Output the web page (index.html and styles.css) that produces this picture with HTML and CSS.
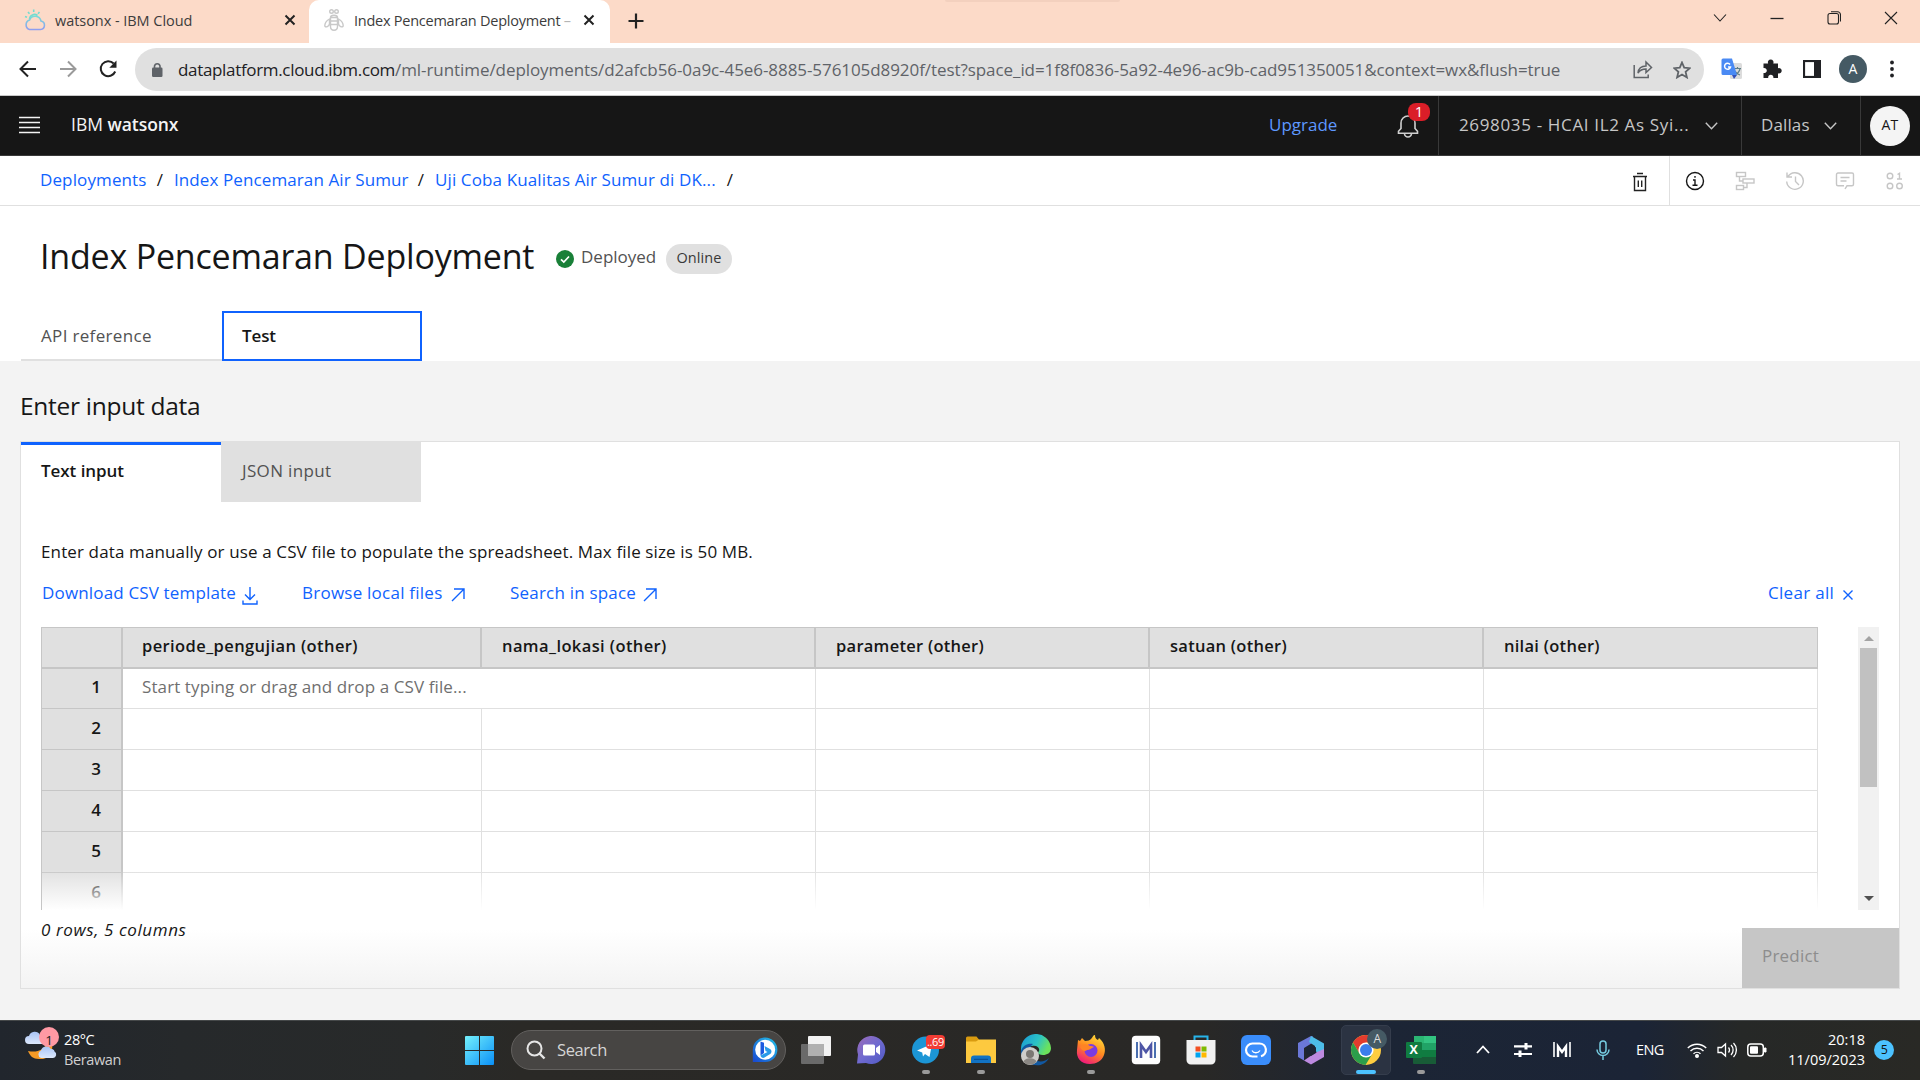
FILE: index.html
```html
<!DOCTYPE html>
<html lang="en">
<head>
<meta charset="utf-8">
<title>Index Pencemaran Deployment</title>
<link rel="stylesheet" href="styles.css">
</head>
<body>
<header class="tabstrip">
  <div class="btab">
    <svg class="fav" width="22" height="24" viewBox="0 0 22 24" fill="none" stroke-width="1.6"><defs><linearGradient id="cl" x1="0" y1="0" x2="0" y2="1"><stop offset="0" stop-color="#79dbd8"/><stop offset="1" stop-color="#8f9ef0"/></linearGradient></defs><path stroke="url(#cl)" d="M5.500 21.500h11a4.300 4.300 0 0 0 .5-8.500 6 6 0 0 0-11.400-1A5 5 0 0 0 5.500 21.500z"/><path stroke="#73dccf" d="M5.500 11a5 5 0 0 1 8-3.500M9.700 1.500v2.500M4 4l1.500 1.800M15.500 4L14 5.800M1 8.500l2 .8"/></svg>
    <span class="bt-text t1">watsonx - IBM Cloud</span>
    <svg class="bx" width="12" height="12" viewBox="0 0 12 12"><path d="M1.500 1.500l9 9M10.500 1.500l-9 9" stroke="#222" stroke-width="2"/></svg>
  </div>
  <div class="btab active">
    <svg class="fav" width="20" height="24" viewBox="0 0 20 24" fill="none" stroke="#c9c9c9" stroke-width="1.400"><circle cx="7.500" cy="3.500" r="1.800"/><circle cx="12.500" cy="3.500" r="1.800"/><path d="M6.500 9.500c0-3 7-3 7 0M6.500 9.500h7v9c0 5-7 5-7 0zM6.500 13h7M6.500 16.500h7M5.500 11C2 13 .8 16 .8 17.800s4.200 1.500 4.700-2zM14.500 11c3.500 2 4.700 5 4.700 6.800s-4.200 1.500-4.700-2z"/></svg>
    <span class="bt-text t2">Index Pencemaran Deployment <i>–</i></span>
    <svg class="bx" width="12" height="12" viewBox="0 0 12 12"><path d="M1.500 1.500l9 9M10.500 1.500l-9 9" stroke="#222" stroke-width="2"/></svg>
  </div>
  <svg class="newtab" width="16" height="16" viewBox="0 0 16 16"><path d="M8 .5v15M.5 8h15" stroke="#222" stroke-width="2.200"/></svg>
  <div class="topglow"></div>
  <div class="wincontrols">
    <svg viewBox="0 0 14 14"><path d="M1 3.500l6 6.500 6-6.500" /></svg>
    <svg viewBox="0 0 14 14"><path d="M.5 7.500h13" stroke-width="1.300"/></svg>
    <svg viewBox="0 0 14 14"><rect x="1" y="2.500" width="10.500" height="10.500" rx="2"/><path d="M4 .8h6.500a3 3 0 0 1 3 3V10.500"/></svg>
    <svg viewBox="0 0 14 14"><path d="M1 1l12 12M13 1L1 13"/></svg>
  </div>
</header>

<div class="toolbar">
  <div class="nav">
    <svg viewBox="0 0 20 20"><path d="M18 10H3M10 2.500L2.500 10l7.500 7.500" stroke="#222"/></svg>
    <svg viewBox="0 0 20 20"><path d="M2 10h15M10 2.500l7.500 7.500-7.500 7.500" stroke="#9a9a9a"/></svg>
    <svg viewBox="0 0 20 20"><path d="M17.200 12.500a7.500 7.500 0 1 1-1.500-8" stroke="#222"/><path d="M18.500 1.500v7.200h-7.200z" fill="#222"/></svg>
  </div>
  <div class="omnibox">
    <svg class="lock" width="12" height="16" viewBox="0 0 12 16"><rect x="1" y="5.500" width="10.500" height="9.500" rx="1.200" fill="#5f6368"/><path d="M3.500 6V4a2.800 2.800 0 0 1 5.500 0v2" fill="none" stroke="#5f6368" stroke-width="1.600"/></svg>
    <span class="url"><b>dataplatform.cloud.ibm.com</b>/ml-runtime/deployments/d2afcb56-0a9c-45e6-8885-576105d8920f/test?space_id=1f8f0836-5a92-4e96-ac9b-cad951350051&amp;context=wx&amp;flush=true</span>
    <svg class="share" width="20" height="19" viewBox="0 0 20 19" fill="none" stroke="#5f6368" stroke-width="1.500"><path d="M1.200 5v12.500h14v-3M5 13c.5-5 3.500-7 8-7V2l5.500 5.500L13 12.500V9C9 9 7 10 5 13z"/></svg>
    <svg class="star" width="18" height="18" viewBox="0 0 18 18" fill="none" stroke="#5f6368" stroke-width="1.800"><path d="M9 1.500l2.200 5.200 5.600.5-4.200 3.700 1.300 5.500L9 13.500l-4.900 2.900 1.300-5.500L1.200 7.200l5.600-.5z"/></svg>
  </div>
  <div class="ext">
    <svg width="22" height="22" viewBox="0 0 22 22"><rect x="9" y="5" width="12" height="16" rx="1.500" fill="#dcdcdc"/><path d="M13 10.500h7M16.500 9v1.500M19 11c-.8 3-3 5-5.500 6M14 13c1 1.800 3 3.500 5 4" stroke="#5e7d86" stroke-width="1.200" fill="none"/><path d="M2 .5h9l5 16.500H2a1.500 1.500 0 0 1-1.500-1.500V2A1.500 1.500 0 0 1 2 .5z" fill="#4a8af4"/><path d="M11 17h5l-3 4z" fill="#3350b8"/><path d="M9 6.500A3 3 0 1 0 9.500 9H7" stroke="#fff" stroke-width="1.500" fill="none"/></svg>
    <svg width="20" height="20" viewBox="0 0 20 20"><path d="M1.500 4.500h4.700a2.800 2.800 0 1 1 5 0h4.800v4.700a2.700 2.700 0 1 1 0 5v4.800h-4.700a2.600 2.600 0 1 0-5 0H1.500v-5a2.600 2.600 0 1 0 0-5z" fill="#202124"/></svg>
    <svg width="18" height="18" viewBox="0 0 18 18"><rect x="1" y="1" width="16" height="16" fill="#fff" stroke="#202124" stroke-width="2.200"/><path d="M11 0h7v18h-7z" fill="#202124"/></svg>
    <span class="profile">A</span>
    <svg width="6" height="18" viewBox="0 0 6 18" fill="#202124"><circle cx="3" cy="2.500" r="1.900"/><circle cx="3" cy="9" r="1.900"/><circle cx="3" cy="15.500" r="1.900"/></svg>
  </div>
</div>

<div class="wx">
  <svg class="burger" width="21" height="20" viewBox="0 0 21 20" stroke="#f4f4f4" stroke-width="1.300"><path d="M0 2.500h21M0 7.500h21M0 12.500h21M0 17.500h21"/></svg>
  <div class="brand">IBM <b>watsonx</b></div>
  <a class="upgrade">Upgrade</a>
  <div class="bell">
    <svg width="22" height="24" viewBox="0 0 22 24" fill="none" stroke="#d0d0d0" stroke-width="1.600"><path d="M1.500 19.200v-2L4 14.500V9a7 7 0 0 1 14 0v5.500l2.500 2.700v2zM7.500 19.500a3.500 3.500 0 0 0 7 0"/></svg>
    <span class="count">1</span>
  </div>
  <div class="acct"><span>2698035 - HCAI IL2 As Syi...</span><svg width="13" height="8" viewBox="0 0 13 8"><path d="M.8.8l5.700 6L12.200.8" fill="none" stroke="#c6c6c6" stroke-width="1.400"/></svg></div>
  <div class="region"><span>Dallas</span><svg width="13" height="8" viewBox="0 0 13 8"><path d="M.8.8l5.700 6L12.200.8" fill="none" stroke="#c6c6c6" stroke-width="1.400"/></svg></div>
  <div class="user"><span>AT</span></div>
</div>

<div class="crumbs">
  <nav><a class="c1">Deployments</a><s>/</s><a class="c2">Index Pencemaran Air Sumur</a><s>/</s><a class="c3">Uji Coba Kualitas Air Sumur di DK...</a><s>/</s></nav>
  <div class="trash"><svg width="16" height="20" viewBox="0 0 16 20" fill="none" stroke="#222" stroke-width="1.400"><path d="M5 1.500h6M1 4.500h14M2.500 4.500V18.500h11v-14M6.300 8.500v6.500M9.700 8.500v6.500"/></svg></div>
  <div class="tools">
    <svg class="info" viewBox="0 0 20 20"><circle cx="10" cy="10" r="8.500"/><path d="M7.500 14.200h5M10 14V9H8M10 5v1.800" /></svg>
    <svg viewBox="0 0 20 20"><rect x="1.500" y="1.500" width="9" height="4"/><rect x="8" y="8" width="11" height="4"/><rect x="1.500" y="14.500" width="7" height="4"/><path d="M4.500 5.500V10H8M12 12v4.500H8.500"/></svg>
    <svg viewBox="0 0 20 20"><path d="M3 5.500a8.300 8.300 0 1 1-1.300 5M2 1.500v4.500h5M10.500 5.500v5l3.500 3.500"/></svg>
    <svg viewBox="0 0 20 20"><path d="M10 18l2-3.200h5a1.500 1.500 0 0 0 1.500-1.500V3.500A1.500 1.500 0 0 0 17 2H3a1.500 1.500 0 0 0-1.500 1.500v9.800A1.500 1.500 0 0 0 3 14.800h6M5.500 6.500h9M5.500 10h6"/></svg>
    <svg viewBox="0 0 20 20"><circle cx="5" cy="5" r="2.800"/><circle cx="5" cy="15" r="2.800"/><circle cx="14.500" cy="15" r="2.800"/><path d="M12.500 3.500l2-1.200V8M12 8h5"/></svg>
  </div>
</div>

<section class="title">
  <div class="heading">
    <h1>Index Pencemaran Deployment</h1>
    <svg width="18" height="18" viewBox="0 0 18 18"><circle cx="9" cy="9" r="9" fill="#198038"/><path d="M5 9.300l2.800 2.700L13 6.500" fill="none" stroke="#fff" stroke-width="1.700"/></svg>
    <span class="deployed">Deployed</span>
    <span class="pill">Online</span>
  </div>
  <div class="ptabs"><div class="api">API reference</div><div class="test">Test</div></div>
</section>

<main class="body">
  <h2>Enter input data</h2>
  <div class="card">
    <div class="itabs"><div class="on">Text input</div><div class="off">JSON input</div></div>
    <p class="desc">Enter data manually or use a CSV file to populate the spreadsheet. Max file size is 50 MB.</p>
    <div class="links">
      <a class="dl">Download CSV template <svg width="16" height="18" viewBox="0 0 16 18"><path d="M8 0v12M3 7.500l5 5 5-5M1 13.500V17h14v-3.500"/></svg></a>
      <a class="br">Browse local files <svg width="14" height="14" viewBox="0 0 14 14"><path d="M1 13L13 1M3 1h10v10"/></svg></a>
      <a class="se">Search in space <svg width="14" height="14" viewBox="0 0 14 14"><path d="M1 13L13 1M3 1h10v10"/></svg></a>
      <a class="clr">Clear all <svg width="12" height="12" viewBox="0 0 12 12"><path d="M1.500 1.500l9 9M10.500 1.500l-9 9"/></svg></a>
    </div>
    <div class="sheetwrap">
      <div class="sheet">
        <div class="row head"><div class="n"></div><div class="w">periode_pengujian (other)</div><div>nama_lokasi (other)</div><div class="p">parameter (other)</div><div class="p">satuan (other)</div><div class="p">nilai (other)</div></div>
        <div class="row first"><div class="n">1</div><div class="wide">Start typing or drag and drop a CSV file...</div><div></div><div></div><div></div></div>
        <div class="row"><div class="n">2</div><div></div><div></div><div></div><div></div><div></div></div>
        <div class="row"><div class="n">3</div><div></div><div></div><div></div><div></div><div></div></div>
        <div class="row"><div class="n">4</div><div></div><div></div><div></div><div></div><div></div></div>
        <div class="row"><div class="n">5</div><div></div><div></div><div></div><div></div><div></div></div>
        <div class="row"><div class="n">6</div><div></div><div></div><div></div><div></div><div></div></div>
        <div class="fade"></div>
      </div>
      <div class="scroll">
        <svg width="10" height="5" viewBox="0 0 10 5"><path d="M0 5l5-5 5 5z" fill="#a3a3a3"/></svg>
        <div class="thumb"></div>
        <svg width="10" height="5" viewBox="0 0 10 5"><path d="M0 0l5 5 5-5z" fill="#505050"/></svg>
      </div>
    </div>
    <div class="foot"><em>0 rows, 5 columns</em><button class="predict">Predict</button></div>
  </div>
</main>

<footer class="taskbar">
  <div class="weather">
    <svg width="36" height="38" viewBox="0 0 36 38"><defs><linearGradient id="cg" x1="0" y1="0" x2="0" y2="1"><stop offset="0" stop-color="#a9c4f5"/><stop offset="1" stop-color="#dce8fb"/></linearGradient></defs><path d="M5 19a4 4 0 0 1 0-8 6 6 0 0 1 11-1l3 9z" fill="url(#cg)"/><path d="M4 26c9 2 16-1 19-8h5c2 12-6 17-13 16-6 0-9-3-11-8z" fill="#f59a25"/><path d="M17 33a4 4 0 0 1 0-7.500 5.500 5.500 0 0 1 10-1.500c3 0 3.500 2 3.500 2.500A3.500 3.500 0 0 1 29 33z" fill="url(#cg)"/><circle cx="25" cy="12" r="10" fill="#ff99a4"/></svg>
    <span class="wbadge">1</span>
    <div class="wtext"><span>28°C</span><span class="dim">Berawan</span></div>
  </div>
  <svg class="start" width="29" height="29" viewBox="0 0 29 29"><defs><linearGradient id="wn" x1="0" y1="0" x2="1" y2="1"><stop offset="0" stop-color="#74f0fb"/><stop offset="1" stop-color="#0a90f8"/></linearGradient></defs><path d="M0 1a1 1 0 0 1 1-1h13v14H0zM15 0h13a1 1 0 0 1 1 1v13H15zM0 15h14v14H1a1 1 0 0 1-1-1zM15 15h14v13a1 1 0 0 1-1 1H15z" fill="url(#wn)"/></svg>
  <div class="search">
    <svg width="20" height="20" viewBox="0 0 20 20" fill="none" stroke="#e6e6e6" stroke-width="2"><circle cx="8.500" cy="8.500" r="7"/><path d="M13.500 13.500l5 5" stroke-width="2.400"/></svg>
    <span>Search</span>
    <svg width="26" height="26" viewBox="0 0 26 26"><defs><linearGradient id="bg" x1="1" y1="0" x2="0" y2="1"><stop offset="0" stop-color="#23c4e8"/><stop offset="1" stop-color="#1846d0"/></linearGradient></defs><path d="M.8 25V13A12.300 12.300 0 1 1 13 25z" fill="url(#bg)"/><circle cx="13.200" cy="12.800" r="10" fill="#fff"/><path d="M8.500 4.500l3.500 1.200v10.300L8.500 18.500z" fill="#1d5be0"/><path d="M12.500 9l5.500 3c2 1.200 2 4-.2 5.200L12.500 20.500c-1.500 1-3.700 0-4-2l7-3.500-2-1z" fill="#2a9be8"/></svg>
  </div>
  <div class="apps">
    <div class="app"><svg width="32" height="30" viewBox="0 0 32 30"><rect x="1" y="9" width="23" height="20" rx="1" fill="#6a6a6a"/><rect x="8" y="1" width="23" height="20" rx="1" fill="#f2f2f2"/><path d="M8 9h16v12H8z" fill="#b0b0b0"/></svg></div>
    <div class="app"><svg width="30" height="30" viewBox="0 0 30 30"><defs><linearGradient id="vc" x1="0" y1="0" x2="1" y2="1"><stop offset="0" stop-color="#9d6bb8"/><stop offset=".5" stop-color="#6f6ad0"/><stop offset="1" stop-color="#4f59c4"/></linearGradient></defs><path d="M1 28.500l1-9A14 14 0 1 1 10 28z" fill="url(#vc)"/><rect x="7" y="9.500" width="12" height="11" rx="1.500" fill="#fff"/><path d="M20 13l4-3v10l-4-3z" fill="#fff"/></svg></div>
    <div class="app run"><svg width="36" height="30" viewBox="0 0 36 30"><circle cx="17.500" cy="15" r="13.500" fill="#1c96d6"/><path d="M9 15.500L24 9l-2.500 13-4.500-3-2 2.500-.8-4z" fill="#fff"/></svg><span class="tg">..69</span></div>
    <div class="app run"><svg width="30" height="28" viewBox="0 0 30 28"><path d="M0 2a1.500 1.500 0 0 1 1.500-1.500h9L13 3.500V10H0z" fill="#d99b10"/><path d="M0 5.500h10l3-2h17V27H0z" fill="#fdc93f"/><path d="M5 27v-4.500A3 3 0 0 1 8 19.500h14a3 3 0 0 1 3 3V27z" fill="#1273c4"/><path d="M8 23.300h14" stroke="#0a4a8c"/></svg></div>
    <div class="app"><svg width="32" height="32" viewBox="0 0 32 32"><defs><linearGradient id="eg" x1="0" y1="0" x2="1" y2=".4"><stop offset="0" stop-color="#1796d8"/><stop offset=".6" stop-color="#2cc4c4"/><stop offset="1" stop-color="#6be25c"/></linearGradient></defs><path d="M1 16a15 15 0 0 1 30-2c0 5-4 7-8 7-5 0-6-2-4-4 1-3-2-6-7-5-5 0-8 3-11 8z" fill="url(#eg)"/><path d="M1 17c2-6 7-8 12-7-5 3-4 15 4 17 5 1 9 0 12-3-4 7-11 9-18 6C4 28 0 22 1 17z" fill="#1258a0"/><circle cx="10" cy="22" r="9" fill="#cfcdca"/><circle cx="10" cy="20" r="4" fill="#7b7773"/><path d="M3.500 28c1-5 12-5 13 0a9 9 0 0 1-13 0z" fill="#8b8783"/></svg></div>
    <div class="app run"><svg width="30" height="30" viewBox="0 0 30 30"><defs><linearGradient id="ff" x1=".8" y1="0" x2=".3" y2="1"><stop offset="0" stop-color="#ffe03a"/><stop offset=".5" stop-color="#ff8a20"/><stop offset="1" stop-color="#f0187c"/></linearGradient></defs><path d="M2 5l2 1 2-3 3 3c3 0 5-1 6-2 2-2 2-4 4-4 0 3 1 4 3 5l1-2c6 5 7 12 5 17-2 6-8 9-14 9C5 29 0 23 1 15z" fill="url(#ff)"/><circle cx="15" cy="15.500" r="6.500" fill="#7a3be0"/><path d="M4 12c3-4 7-3 10-1 2 0 3 0 4 1-3 1-4 3-7 3-2 2-5 1-7-3z" fill="#ff8325"/></svg></div>
    <div class="app"><svg width="30" height="30" viewBox="0 0 30 30"><rect x=".8" y=".8" width="28.400" height="28.400" rx="4" fill="#fdfdfd"/><path d="M6 7v16M24 7v16" stroke="#4a6fb0" stroke-width="2"/><path d="M10 23V10l5 7 5-7v13" fill="none" stroke="#4d55a5" stroke-width="2.600"/></svg></div>
    <div class="app"><svg width="30" height="30" viewBox="0 0 30 30"><path d="M8.500 6V1.500h13V6" fill="none" stroke="#27b4ea" stroke-width="2"/><path d="M.5 5h29v20a4.500 4.500 0 0 1-4.500 4.500H5A4.500 4.500 0 0 1 .5 25z" fill="#f1f1f1"/><path d="M9.500 11.500h5v5h-5z" fill="#f25022"/><path d="M15.500 11.500h5v5h-5z" fill="#7fba00"/><path d="M9.500 17.500h5v5h-5z" fill="#00a4ef"/><path d="M15.500 17.500h5v5h-5z" fill="#ffb900"/></svg></div>
    <div class="app"><svg width="30" height="30" viewBox="0 0 30 30"><rect width="30" height="30" rx="6" fill="#3a8dfb"/><path d="M16.500 21.500H11.500a6.500 6.500 0 0 1 0-13h7a6.500 6.500 0 0 1 1.500 12.800" fill="none" stroke="#fff" stroke-width="2.200"/><path d="M11 15.500c1.500 3 6 3 8 0" fill="none" stroke="#fff" stroke-width="1.300"/></svg></div>
    <div class="app"><svg width="28" height="30" viewBox="0 0 28 30"><path d="M14 1L1 8v14l6 3.500V13l9-5.500V1.500z" fill="#6b78d8"/><path d="M14 1l13 7.500V21l-9-5v-5l-6-4z" fill="#4dbde8"/><path d="M27 14v8l-13 7.500L7 25.500l11-7.500z" fill="#bd8ae0"/><path d="M14 9.500l5 3v5.500l-5 3-5-3v-5.500z" fill="#1c2535"/></svg></div>
    <div class="app current"><svg width="32" height="32" viewBox="0 0 32 32"><circle cx="16" cy="16" r="15" fill="#ffcd40"/><path d="M3 8.500A15 15 0 0 1 29 8.500H16l-6.500 11z" fill="#e33b2e"/><path d="M3 8.500A15 15 0 0 0 15.500 31l7-11.500H9.500z" fill="#2c9e4b"/><circle cx="16" cy="16" r="7.600" fill="#fff"/><circle cx="16" cy="16" r="6" fill="#3b7ded"/></svg><span class="ca">A</span></div>
    <div class="app run"><svg width="30" height="28" viewBox="0 0 30 28"><path d="M8 0h21v7H8z" fill="#2bb673"/><path d="M18 0h12v7H18z" fill="#33c481"/><path d="M7 7h23v7H7z" fill="#21a366"/><path d="M7 14h23v7H7z" fill="#107c41"/><path d="M7 21h23v7H8a1 1 0 0 1-1-1z" fill="#185c37"/><rect y="6" width="16" height="16" rx="1" fill="#107c41"/></svg><span class="xl">X</span></div>
  </div>
  <div class="tray">
    <svg width="14" height="9" viewBox="0 0 14 9"><path d="M1 8l6-6.500L13 8" fill="none" stroke="#fff" stroke-width="1.800"/></svg>
    <svg width="18" height="16" viewBox="0 0 18 16"><path d="M0 4.300h18M0 12h18" stroke="#fff" stroke-width="2.200"/><path d="M12 1v6.500M6 8.500V15" stroke="#fff" stroke-width="3"/></svg>
    <svg width="18" height="15" viewBox="0 0 18 15"><path d="M1 0v15M17 0v15" stroke="#fff" stroke-width="1.600"/><path d="M5 15V4.500L9 10l4-5.500V15" fill="none" stroke="#fff" stroke-width="2.400"/></svg>
    <svg width="14" height="20" viewBox="0 0 14 20" fill="none" stroke="#75cbe0" stroke-width="1.500"><rect x="4" y="1" width="6" height="12" rx="3"/><path d="M1 9.500a6 6 0 0 0 12 0M7 15.500V20"/></svg>
    <span class="eng">ENG</span>
    <svg width="20" height="16" viewBox="0 0 20 16" fill="none" stroke="#fff" stroke-width="1.400"><path d="M.8 6a13 13 0 0 1 18.400 0M3.500 9a9.200 9.200 0 0 1 13 0M6.500 11.800a5 5 0 0 1 7 0"/><circle cx="10" cy="14" r="1.300" fill="#fff"/></svg>
    <svg width="20" height="16" viewBox="0 0 20 16" fill="none" stroke="#fff" stroke-width="1.300"><path d="M1 5.500h3.500L8.500 2v12l-4-3.500H1zM11.500 5.500a4 4 0 0 1 0 5M14 3a7 7 0 0 1 0 10M16.500 1a10 10 0 0 1 0 14"/></svg>
    <svg width="20" height="14" viewBox="0 0 20 14"><rect x=".8" y="1" width="15.500" height="12" rx="3" fill="none" stroke="#fff" stroke-width="1.500"/><rect x="3" y="3.200" width="8" height="7.600" rx="1" fill="#fff"/><path d="M17.500 5h1.500v4h-1.500z" fill="#fff" stroke="#fff"/></svg>
    <div class="clock"><span>20:18</span><span>11/09/2023</span></div>
    <span class="notif">5</span>
  </div>
</footer>
</body>
</html>
```
FILE: styles.css
```css
* { box-sizing: border-box; }
body {
  margin: 0; width: 1920px; height: 1080px; overflow: hidden;
  display: flex; flex-direction: column; background: #fff; color: #161616;
  font: 17px/24px "Open Sans", "Noto Sans", sans-serif; letter-spacing: .12px;
}
svg { display: block; flex: none; }
h1, h2, p { margin: 0; font-weight: 400; }
a { color: #0f62fe; text-decoration: none; }
s { text-decoration: none; }
b { font-weight: 600; }

/* browser tab strip */
.tabstrip { position: relative; height: 43px; flex: none; background: #fcdac8; display: flex; align-items: flex-start; }
.btab { height: 43px; width: 309px; padding: 0 13px 3px 24px; display: flex; align-items: center; }
.btab.active { width: 301px; padding: 0 15px 3px 15px; background: #fff; border-radius: 10px 10px 0 0; }
.bt-text { font-size: 14.500px; color: #3c3c3c; flex: 1; white-space: nowrap; padding-top: 1px; }
.t1 { margin-left: 9px; letter-spacing: -.05px; }
.t2 { margin-left: 10px; letter-spacing: -.25px; }
.t2 i { font-style: normal; color: #b5b5b5; }
.newtab { margin: 13px 0 0 18px; }
.topglow { position: absolute; left: 945px; top: 0; width: 175px; height: 2px; background: #f3d0be; border-radius: 0 0 2px 2px; }
.wincontrols { margin-left: auto; display: flex; gap: 43px; padding: 11px 22px 0 0; }
.wincontrols svg { width: 14px; height: 14px; fill: none; stroke: #222; stroke-width: 1.100; }

.toolbar { height: 53px; flex: none; display: flex; align-items: center; border-bottom: 1px solid #c8c8c8; background: #fff; }
.nav { display: flex; gap: 20px; padding-left: 18px; width: 135px; }
.nav svg { width: 20px; height: 20px; fill: none; stroke-width: 2; }
.omnibox { width: 1569px; height: 43px; margin-top: 1px; border-radius: 22px; background: #e0e0e0; display: flex; align-items: center; padding: 0 13px 0 16px; }
.lock { margin-right: 15px; }
.url { flex: 1; white-space: nowrap; color: #5f6368; letter-spacing: -.07px; }
.url b { font-weight: 400; color: #202124; letter-spacing: -.33px; }
.share { margin-right: 20px; }
.ext { display: flex; align-items: center; padding-left: 17px; }
.ext svg:nth-child(2) { margin-left: 19px; }
.ext svg:nth-child(3) { margin-left: 21px; }
.profile { width: 28px; height: 28px; margin: 0 22px 0 18px; border-radius: 50%; background: #455a64; color: #fff; font-size: 14px; line-height: 28px; text-align: center; }

/* product header */
.wx { height: 60px; flex: none; display: flex; align-items: stretch; background: #161616; border-bottom: 1px solid #393939; color: #c6c6c6; line-height: 57px; white-space: nowrap; }
.burger { margin: 19px 0 0 19px; }
.brand { margin-left: 31px; color: #f4f4f4; width: 1198px; font-size: 17.500px; letter-spacing: 0; }
.brand b { letter-spacing: -.05px; }
.upgrade { color: #5e98ff; width: 128px; letter-spacing: 0; }
.bell { position: relative; width: 41px; padding-top: 18px; }
.count { position: absolute; left: 11px; top: 7px; width: 22px; height: 18px; border-radius: 8px; background: #da1e28; color: #fff; font-size: 15px; line-height: 17px; text-align: center; }
.acct { border-left: 1px solid #393939; width: 303px; padding-left: 20px; display: flex; align-items: flex-start; letter-spacing: .65px; }
.acct span { width: 246px; }
.region { border-left: 1px solid #393939; width: 119px; padding-left: 19px; display: flex; align-items: flex-start; }
.region span { width: 63px; }
.acct svg, .region svg { margin-top: 26px; }
.user { border-left: 1px solid #393939; padding: 10px 0 0 9px; }
.user span { display: block; width: 40px; height: 40px; border-radius: 50%; background: #f4f4f4; color: #161616; font-size: 14px; line-height: 38px; text-align: center; }

.crumbs { height: 50px; flex: none; border-bottom: 1px solid #e0e0e0; display: flex; }
.crumbs nav { padding-left: 40px; flex: 1; display: flex; line-height: 48px; white-space: nowrap; }
.crumbs s { width: 28px; text-align: center; }
.crumbs s:last-child { padding-right: 2px; }
.c1 { width: 106px; } .c2 { width: 233px; letter-spacing: .1px; } .c3 { width: 282px; letter-spacing: .12px; }
.trash { width: 38px; border-right: 1px solid #e0e0e0; padding-top: 16px; }
.tools { display: flex; gap: 30px; padding: 15px 15px 0 15px; }
.tools svg { width: 20px; height: 20px; fill: none; stroke: #c6c6c6; stroke-width: 1.400; }
.tools .info { stroke: #161616; }

.title { height: 155px; flex: none; display: flex; flex-direction: column; justify-content: space-between; }
.heading { display: flex; align-items: center; padding: 25px 0 0 40px; }
.heading svg { margin: 6px 7px 0 0; }
h1 { font-size: 34px; line-height: 50px; letter-spacing: -.2px; width: 516px; white-space: nowrap; }
.deployed { color: #525252; width: 85px; letter-spacing: 0; margin-top: 2px; }
.pill { width: 66px; height: 30px; margin-top: 5px; border-radius: 15px; background: #e0e0e0; color: #393939; font-size: 14.500px; line-height: 28px; text-align: center; }
.ptabs { display: flex; padding-left: 21px; }
.api { width: 201px; height: 50px; border-bottom: 2px solid #e0e0e0; padding-left: 20px; color: #525252; letter-spacing: .33px; line-height: 49px; }
.test { width: 200px; height: 50px; border: 2px solid #0f62fe; padding-left: 18px; font-weight: 600; line-height: 46px; letter-spacing: -.1px; }

.body { flex: 1; background: #f3f3f3; padding: 26px 20px 0; }
h2 { font-size: 24.500px; line-height: 38px; letter-spacing: -.28px; height: 54px; }
.card { height: 548px; border: 1px solid #e0e0e0; background: #fff; display: flex; flex-direction: column; }
.itabs { display: flex; height: 60px; line-height: 57px; }
.on { width: 200px; border-top: 3px solid #0f62fe; padding-left: 20px; font-weight: 600; line-height: 51px; letter-spacing: -.05px; }
.off { width: 200px; background: #e0e0e0; color: #525252; padding-left: 21px; letter-spacing: .35px; }
.desc { padding: 38px 0 0 20px; height: 79px; letter-spacing: .13px; }
.links { display: flex; padding: 0 0 0 21px; height: 46px; align-items: flex-start; }
.links a { display: flex; align-items: center; height: 24px; white-space: nowrap; justify-content: space-between; }
.links svg { fill: none; stroke: #0f62fe; stroke-width: 1.400; margin-top: 3px; }
.dl { width: 216px; margin-right: 44px; letter-spacing: .16px; } .br { width: 163px; margin-right: 45px; letter-spacing: .24px; } .se { width: 147px; letter-spacing: .2px; }
.clr { width: 86px; margin: 0 45px 0 auto; letter-spacing: .3px; }
.links .dl svg { margin-top: 5px; }

/* spreadsheet */
.sheetwrap { display: flex; padding-left: 20px; height: 283px; }
.sheet { position: relative; width: 1778px; height: 283px; overflow: hidden; }
.row { display: grid; grid-template-columns: 82px 359px repeat(4, 334px); height: 41px; line-height: 38px; }
.row > div { border-right: 1px solid #e0e0e0; border-bottom: 1px solid #e0e0e0; padding-left: 19px; white-space: nowrap; }
.row > .n { background: #e0e0e0; border: solid #c6c6c6; border-width: 0 2px 1px 1px; padding: 0 20px 0 0; text-align: right; font-weight: 600; }
.row.head { height: 42px; line-height: 36px; font-weight: 600; font-size: 16.500px; letter-spacing: .4px; }
.row.head > div { background: #e0e0e0; border: solid #c6c6c6; border-width: 1px 2px 2px 0; padding-left: 20px; }
.row.head > .p { letter-spacing: .27px; }
.row.head > .n { border-left-width: 1px; }
.row.head > .w { padding-left: 19px; }
.row.head > div:last-child { border-right-width: 1px; }
.row.first { height: 40px; line-height: 36px; }
.row.first .wide { grid-column: 2 / 4; color: #6f6f6f; letter-spacing: .1px; }
.fade { position: absolute; left: 1px; right: 0; bottom: 0; height: 41px; background: linear-gradient(rgba(255,255,255,0), #fff); }
.scroll { margin-left: 39px; width: 21px; background: #f1f1f1; display: flex; flex-direction: column; align-items: center; padding: 9px 0; }
.thumb { width: 17px; height: 139px; margin: 7px 0 auto; background: #c1c1c1; }
.foot { flex: 1; display: flex; justify-content: space-between; align-items: flex-end; background: linear-gradient(#fff 25%, #f3f3f3); }
.foot em { padding-left: 20px; align-self: flex-start; margin-top: 8px; letter-spacing: .6px; }
.predict { width: 157px; height: 60px; border: 0; padding: 0 0 4px 20px; background: #c6c6c6; color: #8d8d8d; font: inherit; letter-spacing: .2px; text-align: left; }

/* taskbar */
.taskbar { height: 60px; flex: none; display: flex; align-items: center; border-top: 1px solid #454849; color: #fff; font-size: 14.500px; letter-spacing: -.4px; background: linear-gradient(90deg, #21262d 0, #26292b 180px, #282a2a 420px, #2a2926 520px, #292826 1200px, #1c2535 1380px, #1b2436 1640px, #262827 1740px, #292925 1920px); }
.weather { position: relative; display: flex; align-items: center; width: 465px; padding-left: 24px; }
.weather svg { margin: -13px 4px 0 0; }
.wbadge { position: absolute; left: 39px; top: -1px; width: 20px; text-align: center; color: #222; font-size: 13.500px; line-height: 20px; }
.wtext { display: flex; flex-direction: column; line-height: 20px; margin-top: -1px; }
.dim { color: #d0d0d0; }
.start { margin-top: -1px; }
.search { width: 275px; height: 40px; margin: -1px 0 0 17px; border: 1px solid #62605e; border-radius: 20px; background: #474543; display: flex; align-items: center; padding: 0 7px 0 14px; font-size: 16.500px; color: #d5d5d5; }
.search span { flex: 1; margin-left: 11px; line-height: 36px; }
.apps { display: flex; margin: -1px 0 0 2px; }
.app { position: relative; width: 55px; height: 50px; display: flex; align-items: center; justify-content: center; }
.app.run::after { content: ""; position: absolute; left: 24px; bottom: 1px; width: 8px; height: 4px; border-radius: 2px; background: #9a9a9a; }
.app.current::before { content: ""; position: absolute; inset: 0 2px 0 3px; border: 1px solid #353d4c; border-radius: 5px; background: #2b3342; }
.app.current svg { position: relative; }
.app.current::after { content: ""; position: absolute; left: 18px; bottom: 1px; width: 20px; height: 4px; border-radius: 2px; background: #4cc2ff; }
.tg { position: absolute; left: 28px; top: 10px; width: 19px; height: 14px; border-radius: 4px; background: #f23c34; font-size: 11px; line-height: 13px; text-align: center; }
.ca { position: absolute; left: 29px; top: 4px; width: 20px; height: 20px; border-radius: 50%; background: #455a64; color: #ddd; font-size: 12px; line-height: 20px; text-align: center; }
.xl { position: absolute; left: 12px; top: 15px; width: 17px; font-size: 12.500px; font-weight: 700; line-height: 20px; text-align: center; }
.tray { display: flex; align-items: center; margin: -2px 0 0 28px; }
.tray svg:nth-child(2) { margin-left: 24px; }
.tray svg:nth-child(3) { margin-left: 21px; }
.tray svg:nth-child(4) { margin-left: 25px; }
.eng { width: 29px; margin: 0 22px 0 26px; letter-spacing: -.6px; }
.tray svg:nth-child(n+7) { margin-left: 10px; }
.clock { width: 98px; display: flex; flex-direction: column; align-items: flex-end; line-height: 20px; letter-spacing: 0; }
.notif { width: 20px; height: 20px; margin-left: 9px; border-radius: 50%; background: #4cc2ff; color: #111; font-size: 12.500px; line-height: 20px; text-align: center; }
```
